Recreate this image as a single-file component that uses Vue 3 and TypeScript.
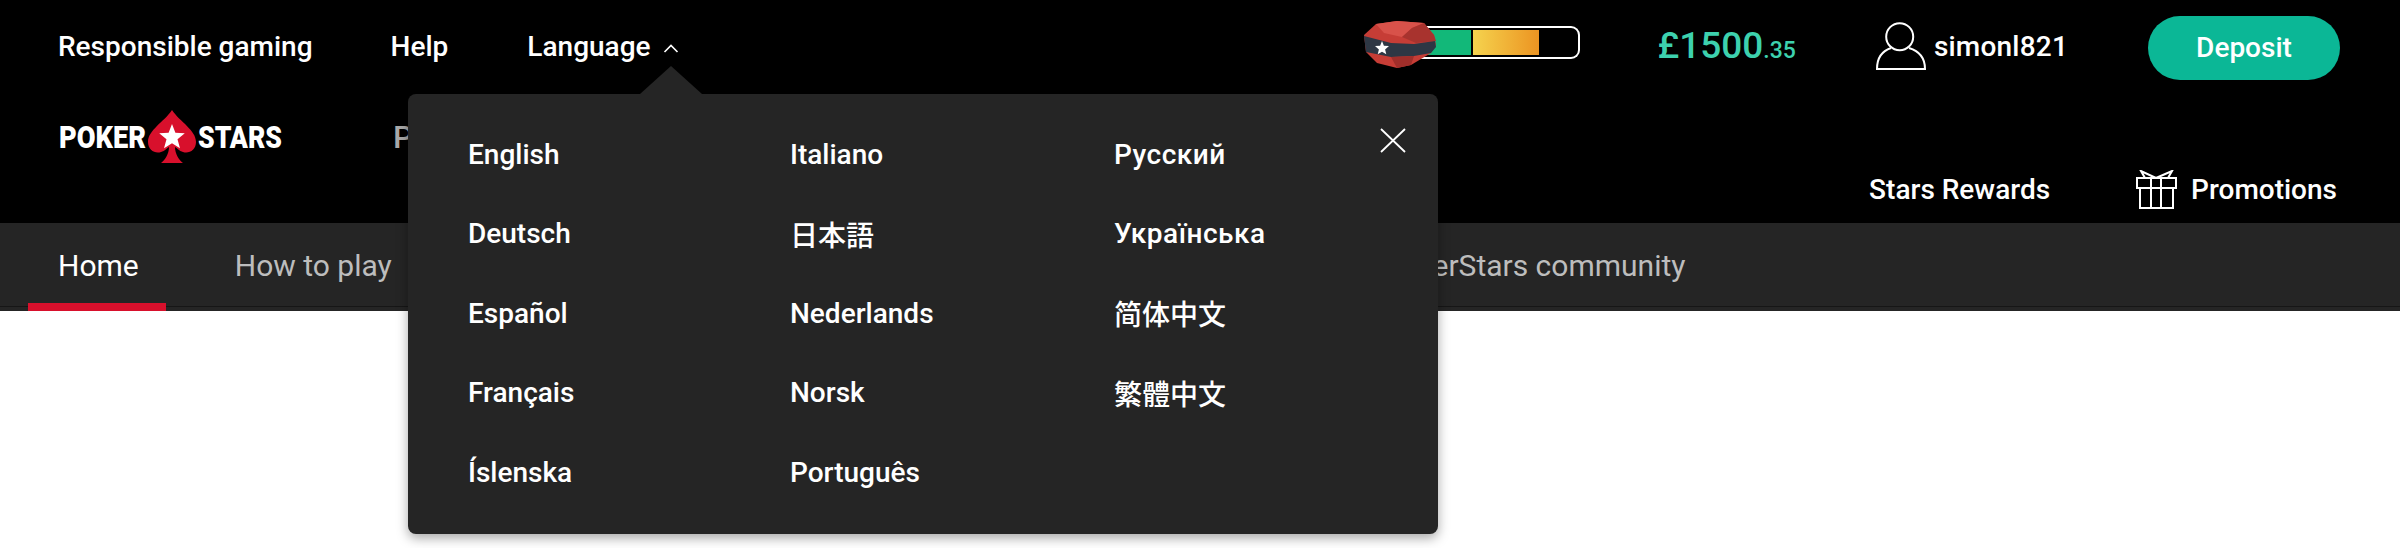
<template>
  <div class="page">
    <header class="header">
      <div class="top-row">
        <a class="top-link first">Responsible gaming</a>
        <a class="top-link help">Help</a>
        <a class="top-link lang">
          Language
          <svg class="caret" viewBox="0 0 16 9" fill="none" stroke="#fff" stroke-width="1.6"><path d="M1.5 8 8 1.5 14.5 8" /></svg>
        </a>
        <div class="account">
          <div class="progress">
            <svg class="gem" viewBox="0 0 72 48">
              <path d="M12 3 33 0 60 2 70 14 72 24 67 32 47 44 33 47 13 42 2 31 0 14Z" fill="#c63d36" />
              <path d="M12 3 33 0 60 2 48 7 38 16 20 12Z" fill="#d8524a" />
              <path d="M38 16 48 7 60 2 70 14 72 20 52 22Z" fill="#a8332e" />
              <path d="M0 15 27 22 50 23 71 20 72 26 67 32 50 35 27 36 2 31Z" fill="#2e3744" />
              <path d="M27 36 50 35 47 44 33 47Z" fill="#a02e2a" />
              <path d="M18 20 19.900 24.700 25 25.100 21.100 28.400 22.300 33.300 18 30.700 13.700 33.300 14.900 28.400 11 25.100 16.100 24.700Z" fill="#fff" />
            </svg>
            <span class="seg green"></span>
            <span class="seg orange"></span>
          </div>
          <div class="balance">£1500<small>.35</small></div>
          <svg class="user" viewBox="0 0 53 50" fill="none" stroke="#fff" stroke-width="2">
            <circle cx="25.700" cy="15.700" r="13.500" />
            <path d="M17 27C8 30 3 37 3 48H51C51 37 45 30 35 27" />
          </svg>
          <span class="username">simonl821</span>
          <button class="deposit">Deposit</button>
        </div>
      </div>

      <div class="main-row">
        <svg class="logo" viewBox="0 0 260 53" role="img" aria-label="PokerStars">
          <text x="0" y="38" textLength="87" lengthAdjust="spacingAndGlyphs" class="logo-text">POKER</text>
          <path d="M113 0C105 12 89 20 89 32 89 40 96 44 102 42 106 41 108 38 110 37 110 44 106 50 102 53H124C120 50 116 44 116 37 118 38 120 41 124 42 130 44 137 40 137 32 137 20 121 12 113 0Z" fill="#d8102c" />
          <path d="M113 14 116.400 22.800 125.800 23.300 118.500 29.200 121 38.300 113 33.200 105 38.300 107.500 29.200 100.200 23.300 109.600 22.800Z" fill="#fff" />
          <text x="139" y="38" textLength="84" lengthAdjust="spacingAndGlyphs" class="logo-text">STARS</text>
        </svg>
        <a class="main-link">Poker</a>
        <div class="main-right">
          <a class="right-link">Stars Rewards</a>
          <svg class="gift" viewBox="0 0 41 39" fill="none" stroke="#fff" stroke-width="2">
            <path d="M1 8H40V18H1ZM4 18V38H37V18M15 8V38M25 8V38" />
            <path d="M20 8 5 1 9 8M20 8 36 1 32 8" />
          </svg>
          <a class="right-link promo">Promotions</a>
        </div>
      </div>
    </header>

    <nav class="subnav">
      <a class="sub-link active">Home</a>
      <a class="sub-link howto">How to play</a>
      <a class="sub-link community">PokerStars community</a>
    </nav>

    <div class="lang-panel">
      <svg class="close" viewBox="0 0 26 25" fill="none" stroke="#fff" stroke-width="1.800">
        <path d="M1 1 25 24M25 1 1 24" />
      </svg>
      <div class="lang-grid">
        <a v-for="lang in languages" :key="lang" class="lang-item">{{ lang }}</a>
      </div>
    </div>
  </div>
</template>

<script setup lang="ts">
const languages: string[] = [
  'English',
  'Deutsch',
  'Español',
  'Français',
  'Íslenska',
  'Italiano',
  '日本語',
  'Nederlands',
  'Norsk',
  'Português',
  'Русский',
  'Українська',
  '简体中文',
  '繁體中文'
]
</script>

<style>
html,
body {
  margin: 0;
  background: #fff;
  overflow: hidden;
}
</style>

<style scoped>
.page {
  position: relative;
  width: 2400px;
  height: 548px;
  overflow: hidden;
  background: #fff;
  font-family: Roboto, "Noto Sans CJK JP", sans-serif;
  font-size: 28px;
  font-weight: 500;
  color: #fff;
}

.header {
  height: 223px;
  background: #000;
}

.top-row {
  display: flex;
  align-items: center;
  height: 92px;
  padding: 0 60px 0 58px;
}
.top-link {
  white-space: nowrap;
}
.help {
  margin-left: 78px;
}
.lang {
  display: flex;
  align-items: center;
  margin-left: 79px;
}
.caret {
  width: 16px;
  height: 9px;
  margin-left: 12px;
  margin-top: 5px;
}

.account {
  display: flex;
  align-items: center;
  margin-left: auto;
}
.progress {
  position: relative;
  display: flex;
  box-sizing: border-box;
  width: 190px;
  height: 33px;
  margin-top: -8px;
  padding: 2px 0;
  border: 2px solid #fff;
  border-left: 0;
  border-radius: 0 9px 9px 0;
}
.gem {
  position: absolute;
  left: -26px;
  top: -7px;
  width: 72px;
  height: 48px;
}
.seg.green {
  width: 81px;
  background: #12b879;
}
.seg.orange {
  width: 66px;
  margin-left: 2px;
  background: linear-gradient(90deg, #f5d34e, #ec9422);
}
.balance {
  margin: -2px 0 0 77.500px;
  font-size: 37px;
  color: #3dd1ae;
}
.balance small {
  font-size: 23px;
}
.user {
  width: 53px;
  height: 50px;
  margin-left: 78px;
}
.username {
  margin-left: 7px;
  letter-spacing: 0.2px;
}
.deposit {
  width: 192px;
  height: 64px;
  margin: 3px 0 0 80px;
  border: 0;
  border-radius: 32px;
  background: #0bb796;
  font: inherit;
  color: #fff;
}

.main-row {
  display: flex;
  height: 131px;
  padding: 0 63px 0 59px;
}
.logo {
  width: 260px;
  height: 53px;
  margin-top: 18px;
}
.logo-text {
  font-family: Roboto, sans-serif;
  font-size: 31px;
  font-weight: 900;
  fill: #fff;
}
.main-link {
  margin: 26px 0 0 74px;
  font-size: 32px;
  color: #aaa;
}
.main-right {
  display: flex;
  align-items: center;
  align-self: flex-start;
  margin: 78px 0 0 auto;
}
.gift {
  width: 41px;
  height: 39px;
  margin-left: 86px;
}
.promo {
  margin-left: 14px;
}

.subnav {
  display: flex;
  box-sizing: border-box;
  height: 88px;
  padding: 0 0 0 28px;
  background: linear-gradient(#252525 83px, #161616 83px, #161616 84px, #252525 84px);
}
.sub-link {
  display: flex;
  align-items: center;
  box-sizing: border-box;
  height: 88px;
  padding: 5px 30px 0;
  border-bottom: 8px solid transparent;
  font-size: 30px;
  font-weight: 400;
  color: #bdbdbd;
  white-space: nowrap;
}
.sub-link.active {
  padding-right: 27px;
  border-bottom-color: #d8102c;
  color: #fff;
}
.howto {
  margin-left: 39px;
}
.community {
  margin-left: 930px;
}

.lang-panel {
  position: absolute;
  left: 408px;
  top: 94px;
  width: 1030px;
  height: 440px;
  border-radius: 8px;
  background: #252525;
  box-shadow: 0 4px 12px rgba(0, 0, 0, 0.35);
}
.lang-panel::before {
  content: "";
  position: absolute;
  left: 232px;
  top: -28px;
  width: 62px;
  height: 28px;
  background: #252525;
  clip-path: polygon(50% 0, 100% 100%, 0 100%);
}
.close {
  position: absolute;
  right: 32px;
  top: 34px;
  width: 26px;
  height: 25px;
}
.lang-grid {
  display: grid;
  grid-auto-flow: column;
  grid-template-rows: repeat(5, 79.5px);
  grid-template-columns: 322px 324px 1fr;
  align-items: center;
  padding: 20.500px 0 0 60px;
}
.lang-item {
  white-space: nowrap;
}
.lang-item:nth-child(11),
.lang-item:nth-child(12) {
  letter-spacing: 0.5px;
}
</style>
